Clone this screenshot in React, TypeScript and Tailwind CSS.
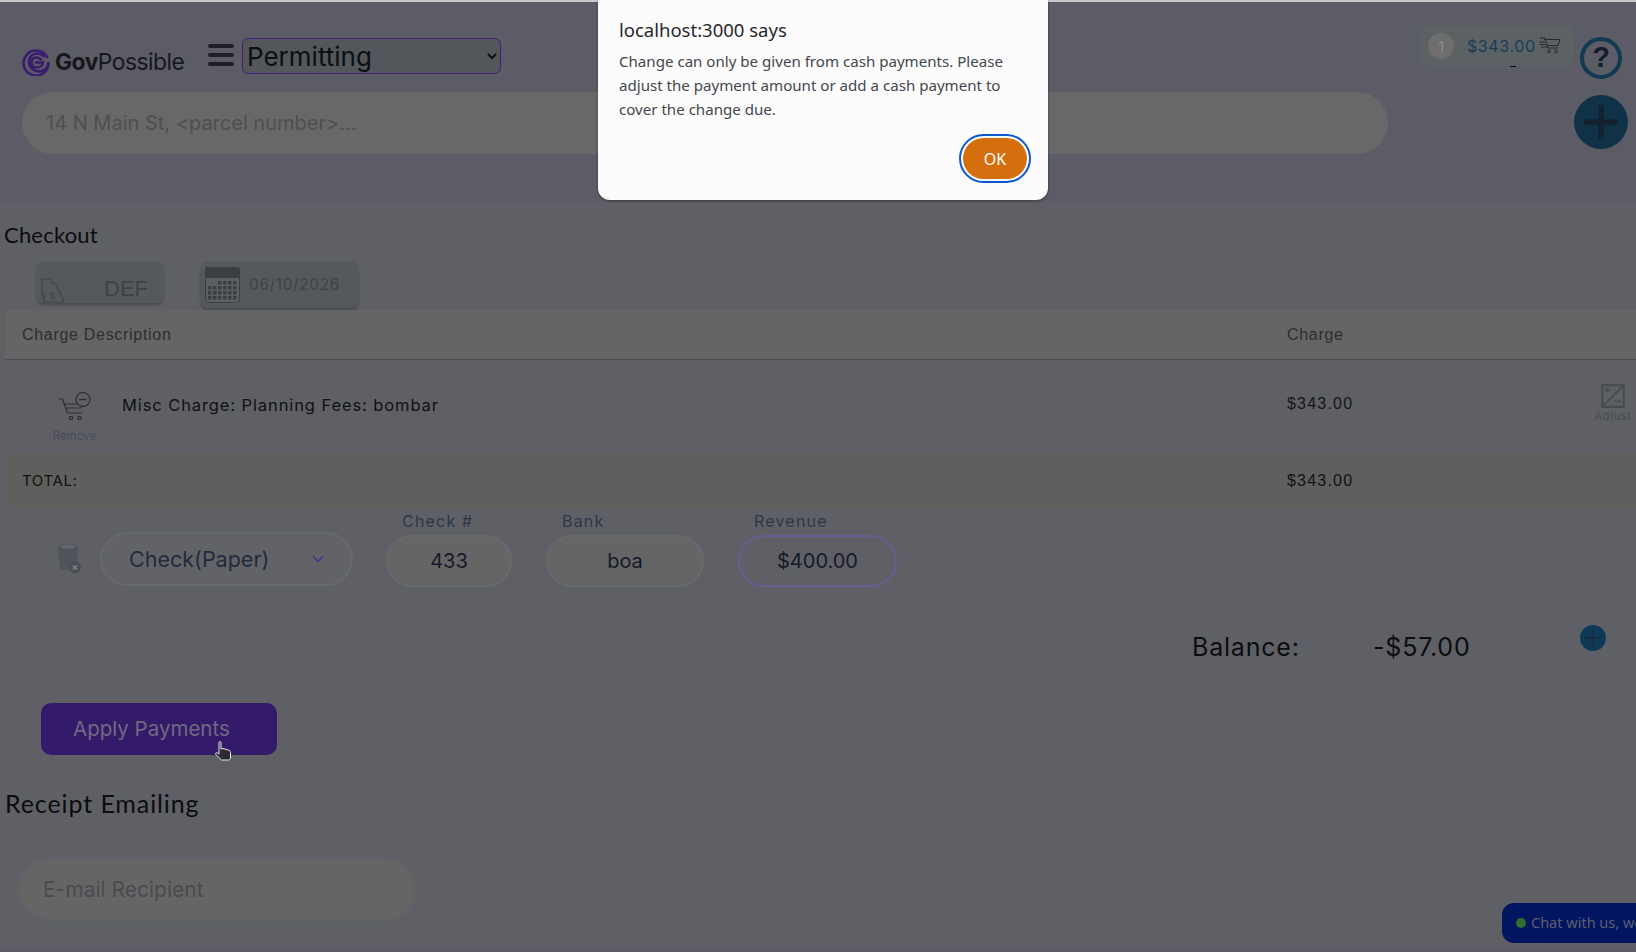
import { ChevronDown } from 'lucide-react';

const poppins = "font-['Inter','Noto_Sans',sans-serif]";
const arial = "font-['Liberation_Sans',Arial,sans-serif]";
const humanist = "font-['Lato','Open_Sans',sans-serif]";
const ubuntu = "font-['Noto_Sans','Open_Sans',sans-serif]";

function Logo() {
  return (
    <svg width="28" height="28" viewBox="0 0 28 28" fill="none">
      <path d="M25 9A12.5 12.5 0 1 0 26.500 14c0 6-4.500 9.500-9.500 9.500S7 19.500 7 14s4-8.500 8-8.500c3 0 5 1 6.500 2.500" stroke="#3a1d6e" strokeWidth="2.600" strokeLinecap="round" />
      <path d="M21 14c0 3.500-3 5.500-6.500 5.500S9.500 17 9.500 14 12 9.500 14.500 9.500c2 0 3.500.8 4.300 2M14 14.500h7" stroke="#3a1d6e" strokeWidth="2.600" strokeLinecap="round" />
    </svg>
  );
}

function RushCart() {
  return (
    <svg width="22" height="18" viewBox="0 0 22 18" fill="none" stroke="#25282e" strokeWidth="1">
      <path d="M1 1h5l3 10h10" />
      <path d="M5 2.500h16l-2 6H8" />
      <path d="M0 5h6M1 7.500h6M2 10h6" />
      <circle cx="10" cy="14.500" r="1.400" />
      <circle cx="17" cy="14.500" r="1.400" />
    </svg>
  );
}

function RemoveCart() {
  return (
    <svg width="33" height="29" viewBox="0 0 33 29" fill="none" stroke="#2c2e33" strokeWidth="1.200">
      <path d="M0.500 7h4l5 14h15" />
      <path d="M6 12h14M7 16h16l2-3" />
      <circle cx="13" cy="26" r="1.700" />
      <circle cx="21.500" cy="26" r="1.700" />
      <circle cx="25" cy="7.500" r="7" />
      <path d="M21.500 7.500h7" strokeWidth="1.500" />
    </svg>
  );
}

function CalendarIcon() {
  return (
    <svg width="35" height="36" viewBox="0 0 35 36">
      <rect x="0.500" y="0.500" width="34" height="35" rx="3" fill="#5b5e62" stroke="#3c3e43" />
      <path d="M0 3a3 3 0 0 1 3-3h29a3 3 0 0 1 3 3v8H0z" fill="#3c3e43" />
      {[0, 1, 2, 3].map((r) =>
        [0, 1, 2, 3, 4, 5].map((c) =>
          r === 0 && c < 2 ? null : (
            <rect key={`${r}-${c}`} x={3 + c * 5} y={14 + r * 5} width="3.500" height="3.500" fill="#3c3e43" />
          ),
        ),
      )}
    </svg>
  );
}

function RegisterIcon() {
  return (
    <svg width="25" height="25" viewBox="0 0 25 25" fill="none" stroke="#3f4246" strokeWidth="1.100">
      <path d="M1 1h9l1 4 4 1 2 5 4 8 1 2v3H3v-6L1 17z" />
      <path d="M0 18h4M0 21h4" />
      <text x="9" y="21" fontSize="9" fill="#3f4246" stroke="none" fontFamily="Liberation Sans">$</text>
    </svg>
  );
}

function TrashIcon() {
  return (
    <svg width="23" height="31" viewBox="0 0 23 31">
      <path d="M0 3c2-3 18-3 20 0l-2 23c-1 1-14 1-16 0z" fill="#50535a" />
      <ellipse cx="10" cy="3.500" rx="8" ry="2" fill="#63666b" />
      <circle cx="17" cy="24.500" r="6" fill="#4b4e53" />
      <path d="M15 22.500l4 4m0-4l-4 4" stroke="#85878b" strokeWidth="1.400" />
    </svg>
  );
}

function AdjustIcon() {
  return (
    <svg width="24" height="24" viewBox="0 0 24 24" fill="none">
      <rect x="1.200" y="1.200" width="21.600" height="21.600" stroke="#494c50" strokeWidth="2.400" />
      <path d="M2 22L22 2" stroke="#494c50" strokeWidth="2" />
      <path d="M6.500 4v5M4 6.500h5M14 17.500h6" stroke="#494c50" strokeWidth="2" />
    </svg>
  );
}

function PlusIcon({ size, weight, color }: { size: number; weight: number; color: string }) {
  return (
    <svg width={size} height={size} viewBox="0 0 32 32" fill="none" stroke={color} strokeWidth={weight} strokeLinecap="round">
      <path d="M16 2v28M2 16h28" />
    </svg>
  );
}

function HandCursor() {
  return (
    <svg width="18" height="20" viewBox="0 0 18 20">
      <path
        d="M5 1.500c0-1.300 2-1.300 2 0V8l1-.5 2 .3 2 .5 3 1c1 .5 1.500 1.500 1.500 2.500V17c0 1.200-1 2-2 2H7.500L1.800 13.500c-.8-1 .2-2.200 1.300-1.700L5 13z"
        fill="#2b2c30"
        stroke="#e6e6e6"
        strokeWidth="1"
      />
    </svg>
  );
}

function Field({ label, value, widthClass, focused }: { label: string; value: string; widthClass: string; focused?: boolean }) {
  return (
    <div className={`flex flex-col ${widthClass}`}>
      <label className={`h-[26px] pl-[16px] text-[16px] leading-[24px] tracking-[1.200px] text-[#2f3648] ${poppins}`}>{label}</label>
      <input
        readOnly
        value={value}
        className={`h-[52px] w-full rounded-full border-2 text-center text-[20px] text-[#151a28] outline-none ${poppins} ${
          focused ? 'border-[#655e93] bg-[#5f6065]' : 'border-[#666a6f] bg-[#656565]'
        }`}
      />
    </div>
  );
}

export default function App() {
  return (
    <div className="relative flex h-[952px] w-full flex-col overflow-hidden bg-[#5f6065]">
      <header className="flex h-[202px] shrink-0 flex-col border-t-2 border-[#c9c9c9] bg-[#5b5c66]">
        <div className="flex h-[90px] items-start pl-[22px] pr-[14px]">
          <div className="mt-[46px] flex w-[163px] items-center gap-[5px] whitespace-nowrap">
            <Logo />
            <span className={`text-[22.800px] leading-[28px] tracking-[-0.5px] text-[#17171c] ${poppins}`}>
              <b className="font-bold">Gov</b>Possible
            </span>
          </div>
          <div className="ml-[23px] mt-[42px] flex w-[26px] flex-col gap-[5px]">
            <span className="h-[4px] rounded-sm bg-[#1e1f24]" />
            <span className="h-[4px] rounded-sm bg-[#1e1f24]" />
            <span className="h-[4px] rounded-sm bg-[#1e1f24]" />
          </div>
          <select className={`ml-[8px] mt-[36px] h-[36px] w-[259px] rounded-md border border-[#41207c] bg-[#53565a] text-[26px] leading-[34px] text-[#0d0f12] outline-none ${poppins}`}>
            <option>Permitting</option>
          </select>
          <div className="relative ml-auto mt-[24px] flex h-[40px] w-[154px] items-center rounded-lg bg-[#5c6164] pl-[8px]">
            <span className={`flex h-[26px] w-[26px] shrink-0 items-center justify-center rounded-full bg-[#6e6e6e] text-[14px] text-[#8c8c8c] ${poppins}`}>1</span>
            <span className={`ml-[13px] text-[16px] tracking-[0.6px] text-[#153e58] ${poppins}`}>$343.00</span>
            <span className="ml-[3px]"><RushCart /></span>
            <span className="absolute left-[90px] top-[40px] h-[1px] w-[6px] bg-[#0c0c0e]" />
          </div>
          <div className={`ml-[6px] mt-[35px] flex h-[42px] w-[42px] items-center justify-center rounded-full border-[4px] border-[#0f3a50] text-[29px] font-bold text-[#151e28] ${arial}`}>?</div>
        </div>
        <div className="flex items-center pl-[22px] pr-[8px]">
          <input
            readOnly
            placeholder="14 N Main St, <parcel number>..."
            className={`h-[62px] w-[1366px] rounded-full bg-[#686868] pl-[24px] text-[20px] outline-none placeholder:text-[#4e4f53] ${poppins}`}
          />
          <div className="mb-[2px] ml-auto flex h-[54px] w-[54px] items-center justify-center rounded-full bg-[#0f3247]">
            <PlusIcon size={34} weight={5} color="#14222f" />
          </div>
        </div>
      </header>

      <h2 className={`ml-[4px] mt-[20px] h-[26px] text-[22px] leading-[26px] tracking-[0.2px] text-[#0c0c0e] ${humanist}`}>Checkout</h2>

      <div className="ml-[37px] mt-[14px] flex h-[48px] items-start">
        <div className="flex h-[41px] w-[126px] items-end rounded-md bg-[#55595c] pl-[4px] shadow-[0_2px_3px_rgba(0,0,0,0.25)]">
          <RegisterIcon />
          <span className={`ml-[38px] text-[22px] leading-[28px] text-[#3e4146] ${arial}`}>DEF</span>
        </div>
        <div className="ml-[38px] flex h-[46px] w-[157px] items-center rounded-md bg-[#55595c] pb-[1px] pl-[4px] shadow-[0_2px_3px_rgba(0,0,0,0.25)]">
          <CalendarIcon />
          <span className={`ml-[9px] text-[15.500px] tracking-[0.6px] text-[#3f4247] ${poppins}`}>06/10/2026</span>
        </div>
      </div>

      <div className="ml-[5px]">
        <div className={`flex h-[50px] items-center border-b border-[#4c4d52] bg-[#656565] text-[16px] tracking-[0.7px] text-[#2e2e30] ${arial}`}>
          <span className="w-[1282px] pl-[17px]">Charge Description</span>
          <span>Charge</span>
        </div>
        <div className="flex h-[93px] items-start">
          <div className="flex w-[117px] flex-col items-center pl-[47px] pr-[25px] pt-[32px]">
            <span className="flex h-[37px] w-[45px] justify-center"><RemoveCart /></span>
            <span className={`text-[11.500px] leading-[14px] text-[#4a4c55] ${poppins}`}>Remove</span>
          </div>
          <span className={`mt-[33px] w-[1165px] text-[16.500px] leading-[24px] tracking-[0.9px] text-[#101114] ${poppins}`}>Misc Charge: Planning Fees: bombar</span>
          <span className={`mt-[34px] w-[307px] text-[16px] leading-[20px] tracking-[1.200px] text-[#15161a] ${arial}`}>$343.00</span>
          <div className="mt-[24px] flex w-[38px] flex-col items-center">
            <AdjustIcon />
            <span className={`text-[11px] leading-[16px] tracking-[0.7px] text-[#494c54] ${poppins}`}>Adjust</span>
          </div>
        </div>
        <div className="flex h-[56px] items-center rounded-bl-md bg-[#5f5f5e] text-[#121214]">
          <span className={`w-[1282px] pl-[17px] text-[15px] tracking-[0.6px] ${poppins}`}>TOTAL:</span>
          <span className={`text-[16px] tracking-[1.200px] ${arial}`}>$343.00</span>
        </div>
      </div>

      <div className="ml-[58px] flex items-start">
        <div className="mt-[34px] w-[23px]"><TrashIcon /></div>
        <div className={`ml-[19px] mt-[23px] flex h-[54px] w-[253px] items-center rounded-full border-2 border-[#66696e] bg-[#626366] pl-[27px] pr-[24px] text-[21.500px] text-[#232b3c] ${poppins}`}>
          <span>Check(Paper)</span>
          <ChevronDown className="ml-auto text-[#4c2f8a]" size={18} strokeWidth={2} />
        </div>
        <div className="ml-[33px]"><Field label="Check #" value="433" widthClass="w-[126px]" /></div>
        <div className="ml-[34px]"><Field label="Bank" value="boa" widthClass="w-[158px]" /></div>
        <div className="ml-[34px]"><Field label="Revenue" value="$400.00" widthClass="w-[159px]" focused /></div>
      </div>

      <div className={`mt-[38px] flex h-[44px] items-start pr-[30px] text-[25px] leading-[44px] tracking-[0.8px] text-[#0c0d10] ${poppins}`}>
        <span className="ml-[1192px] w-[181px]">Balance:</span>
        <span>-$57.00</span>
        <span className="ml-auto flex h-[26px] w-[26px] items-center justify-center rounded-full bg-[#0f3a57]">
          <PlusIcon size={18} weight={3} color="#1a2a3b" />
        </span>
      </div>

      <button className={`relative ml-[41px] mt-[34px] flex h-[52px] w-[236px] shrink-0 items-center rounded-[10px] bg-[#341b6a] pl-[32px] pt-[1px] text-[20.500px] text-[#6f6a80] ${poppins}`}>
        Apply Payments
        <span className="absolute left-[173px] top-[38px]"><HandCursor /></span>
      </button>

      <h2 className={`ml-[5px] mt-[32px] h-[32px] text-[25px] leading-[32px] tracking-[0.9px] text-[#0c0c0e] ${humanist}`}>Receipt Emailing</h2>

      <input
        readOnly
        placeholder="E-mail Recipient"
        className={`ml-[17px] mt-[38px] h-[64px] w-[400px] shrink-0 rounded-full border-2 border-[#5f6268] bg-[#656565] pl-[24px] text-[21px] outline-none placeholder:text-[#4a4b50] ${poppins}`}
      />

      <div className="mt-auto h-[6px] bg-[#5b5c66]" />

      <div className={`absolute bottom-[9px] left-[1502px] flex h-[40px] w-[134px] items-center overflow-hidden rounded-l-xl bg-[#021560] pl-[14px] text-[14.500px] whitespace-nowrap text-[#5c5f70] ${ubuntu}`}>
        <span className="mr-[5px] h-[10px] w-[10px] shrink-0 rounded-full bg-[#2e7030]" />
        Chat with us, we are online
      </div>

      <div className={`absolute left-[598px] top-0 h-[200px] w-[450px] rounded-b-xl bg-[#fcfcfc] pl-[21px] pr-[16px] pt-[18px] shadow-[0_1px_3px_rgba(0,0,0,0.4)] ${ubuntu}`}>
        <p className="text-[18.500px] leading-[24px] text-[#28282c]">localhost:3000 says</p>
        <p className="mt-[7px] text-[15.100px] leading-[24px] text-[#44474d]">
          Change can only be given from cash payments. Please
          <br />
          adjust the payment amount or add a cash payment to
          <br />
          cover the change due.
        </p>
        <div className="absolute bottom-[17px] right-[17px] flex h-[49px] w-[72px] items-center justify-center rounded-full border-2 border-[#0b57d0] p-[2px]">
          <button className="h-full w-full rounded-full bg-[#d56e0c] text-[16px] text-white">OK</button>
        </div>
      </div>
    </div>
  );
}
